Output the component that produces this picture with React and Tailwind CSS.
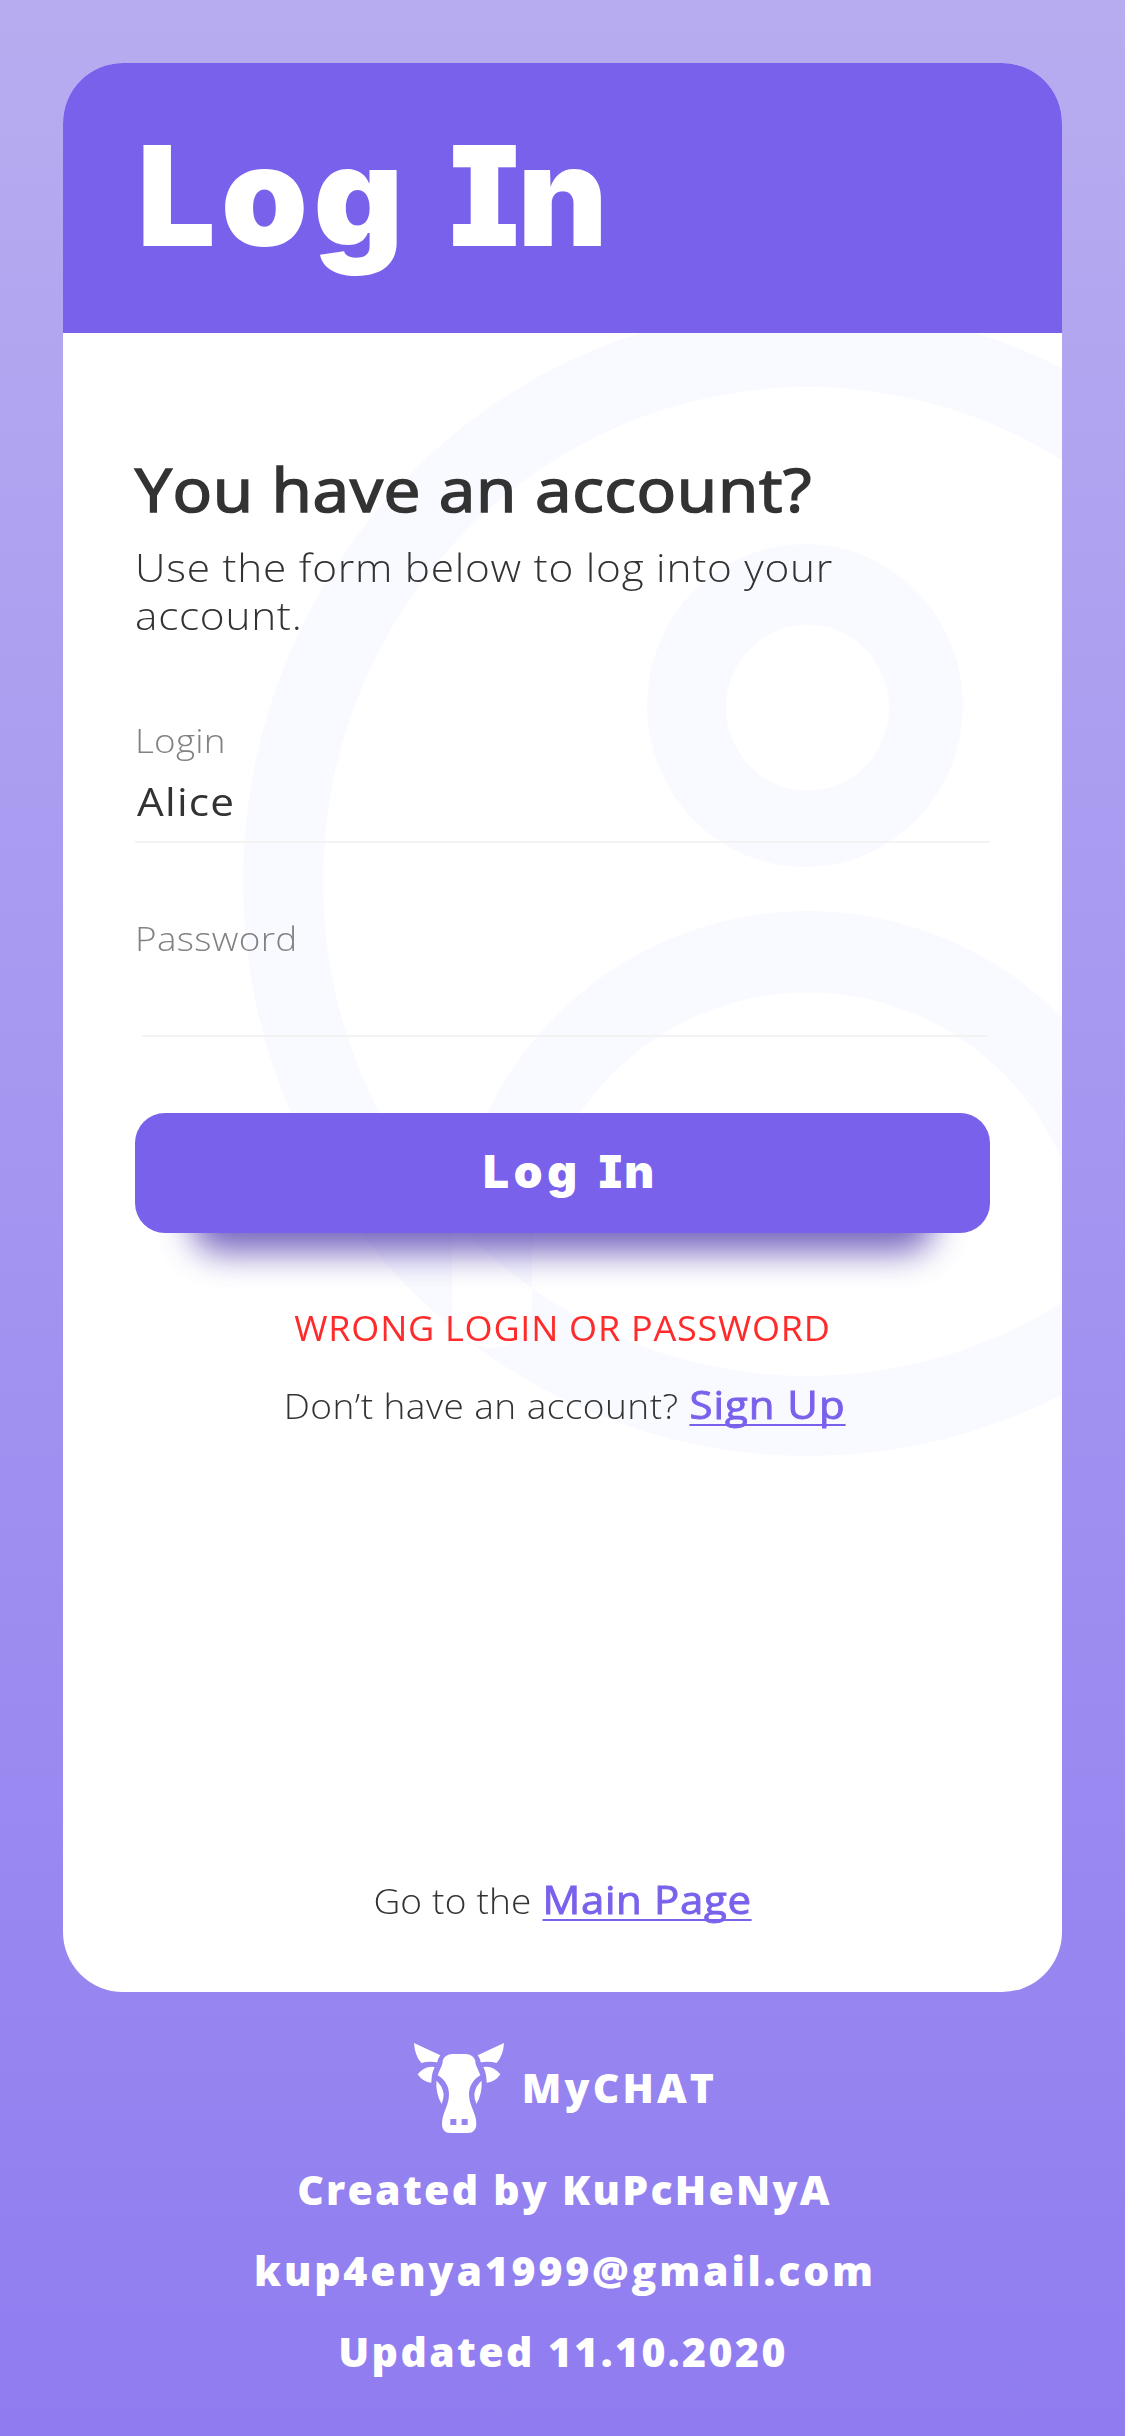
function CowIcon() {
  return (
    <svg viewBox="42 24 270 270" className="size-[90px] shrink-0 fill-white">
      {[false, true].map((flip) => (
        <g key={String(flip)} transform={flip ? "translate(354 0) scale(-1 1)" : undefined}>
          <path d="M42 24L121 61Q113 71 112 82Q87 77 64 84Q44 61 42 24Z" />
          <path d="M53 118Q75 90 104 96Q94 117 94 143Q70 143 53 118Z" />
          <path d="M109 137Q128 152 131 178Q131 193 125 207Q107 177 109 137Z" />
        </g>
      ))}
      <path
        fillRule="evenodd"
        d="M158 57H196C212 57 223 66 226 78C226 91 232 96 241 121C218 135 207 155 207 178C207 213 229 233 229 267C229 284 219 294 203 294H151C135 294 126 284 126 267C126 233 147 213 147 178C147 155 136 135 113 121C122 96 128 91 128 78C131 66 142 57 158 57ZM151 252V270H169V252ZM185 252V270H203V252Z"
      />
    </svg>
  );
}

function UserWatermark() {
  return (
    <svg
      viewBox="0 0 999 1659"
      className="absolute inset-0 h-full w-full fill-[#f9faff]"
      aria-hidden="true"
    >
      <g transform="translate(-63 -333)" fillRule="evenodd">
        <path
          d="M243 881.5A565 574.5 0 0 1 1373 881.5A565 574.5 0 0 1 243 881.5ZM323 881.5A485 494.5 0 0 0 1293 881.5A485 494.5 0 0 0 323 881.5ZM452 1267A356 356 0 0 1 1164 1267V1308A40 40 0 0 1 1084 1308V1268.5A276 276 0 0 0 532 1268.5V1308A40 40 0 0 1 452 1308Z"
        />
        <path d="M647 705.5A158 161.5 0 0 1 963 705.5A158 161.5 0 0 1 647 705.5ZM726 707.5A81.5 83 0 0 0 889 707.5A81.5 83 0 0 0 726 707.5Z" />
      </g>
    </svg>
  );
}

const titleFont = "font-['Inter',sans-serif] font-black [font-feature-settings:'cv08'_1]";
const linkStyle =
  "text-[38.5px] leading-[56px] text-[#7a61ec] [-webkit-text-stroke:0.9px_#7a61ec] underline decoration-2 underline-offset-[5px] [text-decoration-skip-ink:none]";
const labelStyle =
  "origin-left scale-x-110 text-[33.5px] leading-[44px] font-light text-[#828282]";

export default function App() {
  return (
    <div className="flex h-[2436px] w-[1125px] flex-col bg-linear-to-b from-[#b8acf0] to-[#907cf0] px-[63px] pt-[63px] font-['Open_Sans',sans-serif] text-[#333333]">
      <main className="flex h-[1929px] shrink-0 flex-col overflow-hidden rounded-[60px] bg-white">
        <header className="h-[270px] shrink-0 bg-[#7a61ec] pt-[83px] pl-[74px]">
          <h1 className={`${titleFont} text-[139px] leading-[100px] tracking-[5.5px] [word-spacing:7px] text-white`}>
            Log <span className="tracking-[-2px]">In</span>
          </h1>
        </header>

        <section className="relative flex flex-1 flex-col px-[72px] pb-[65px]">
          <UserWatermark />
          <div className="relative flex flex-1 flex-col">
            <h2 className="mt-[116px] origin-left scale-x-[1.08] text-[61px] leading-[80px] tracking-[0.6px] [-webkit-text-stroke:1.6px_#333333]">
              You have an account?
            </h2>
            <p className="mt-[14px] max-w-[680px] origin-left scale-x-110 text-[38.5px] leading-[48px] font-light tracking-[0.66px]">
              Use the form below to log into your account.
            </p>

            <label className={`${labelStyle} mt-[79px] tracking-[0.2px]`}>Login</label>
            <div className="mt-[11px] h-[70px] border-b-2 border-[#f3f3f3] pl-[2px]">
              <span className="inline-block origin-left scale-x-110 text-[38.5px] leading-[56px] tracking-[1.1px]">
                Alice
              </span>
            </div>

            <label className={`${labelStyle} mt-[73px] tracking-[0.3px]`}>Password</label>
            <div className="mr-[2px] ml-[7px] h-[77px] border-b-2 border-[#f3f3f3]" />

            <div className="relative mt-[76px]">
              <div className="absolute inset-x-[56px] -bottom-[19px] h-[80px] rounded-[30px] bg-[#533cae] opacity-80 blur-[17px]" />
              <button
                className={`${titleFont} relative h-[120px] w-full rounded-[30px] bg-[#7a61ec] pb-[3px] pl-[14px] text-[46px] tracking-[4.8px] [word-spacing:3px] text-white`}
              >
                Log <span className="tracking-[2px]">In</span>
              </button>
            </div>

            <p className="mt-[71px] scale-x-[1.06] text-center text-[34px] leading-[48px] tracking-[0.7px] text-[#ff2a2a]">
              WRONG LOGIN OR PASSWORD
            </p>
            <p className="mt-[24px] flex scale-x-[1.09] items-baseline justify-center gap-[10px] pl-[4px]">
              <span className="text-[34px] font-light tracking-[0.4px]">Don’t have an account?</span>
              <a className={`${linkStyle} tracking-[0.9px]`}>Sign Up</a>
            </p>

            <p className="mt-auto flex scale-x-[1.09] items-baseline justify-center gap-[10px]">
              <span className="text-[34px] font-light tracking-[0.17px]">Go to the</span>
              <a className={`${linkStyle} tracking-[0.6px]`}>Main Page</a>
            </p>
          </div>
        </section>
      </main>

      <footer className="flex flex-col items-center pt-[51px] text-[41px] leading-[81px] font-extrabold text-white">
        <div className="mb-[16px] flex h-[90px] items-center gap-[18px] pl-[6px]">
          <CowIcon />
          <span className="-mt-[2px] tracking-[3.1px]">MyCHAT</span>
        </div>
        <p className="pl-[4px] tracking-[2.27px]">Created by KuPcHeNyA</p>
        <p className="pl-[5px] tracking-[2.8px]">kup4enya1999@gmail.com</p>
        <p className="pl-[1px] tracking-[2.4px]">Updated 11.10.2020</p>
      </footer>
    </div>
  );
}
